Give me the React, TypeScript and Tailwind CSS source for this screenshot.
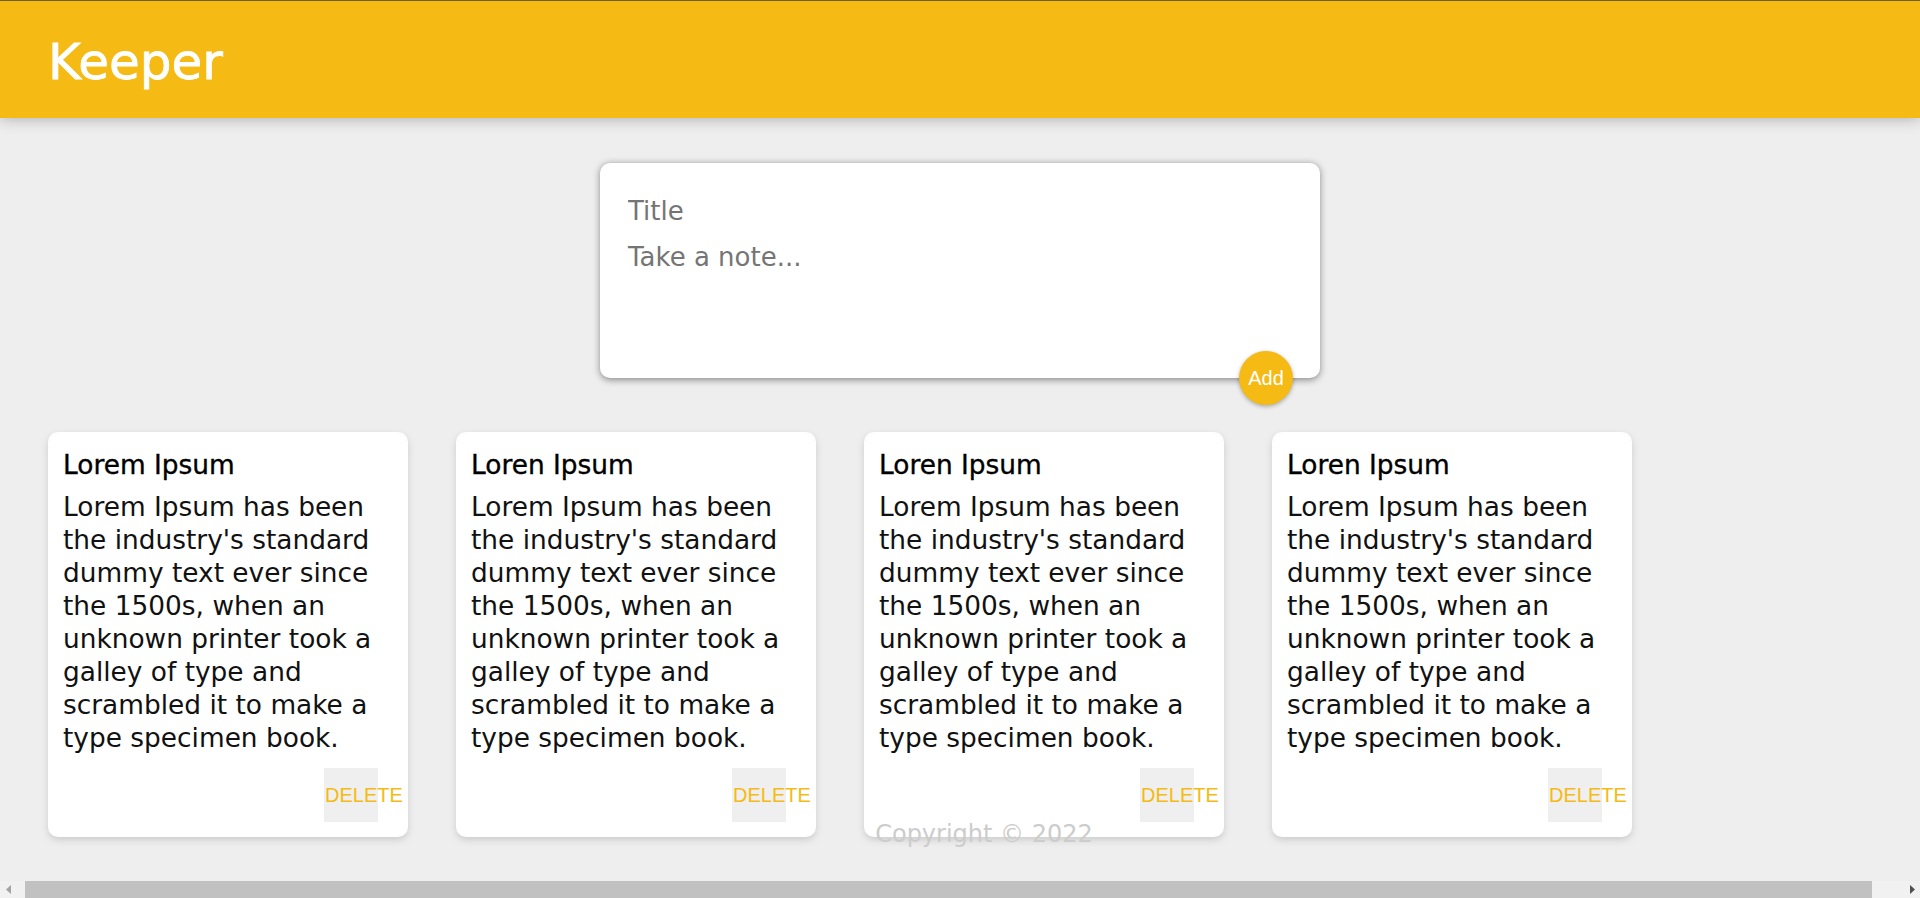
import { useState } from "react";

type Note = { title: string; content: string };

const body =
  "Lorem Ipsum has been the industry's standard dummy text ever since the 1500s, when an unknown printer took a galley of type and scrambled it to make a type specimen book.";

const initialNotes: Note[] = [
  { title: "Lorem Ipsum", content: body },
  { title: "Loren Ipsum", content: body },
  { title: "Loren Ipsum", content: body },
  { title: "Loren Ipsum", content: body },
];

function Header() {
  return (
    <header className="border-t border-[#6e601f] bg-[#f5ba13] h-[118px] px-[48px] pt-[4px] flex items-center shadow-[0_0_15px_0_rgba(0,0,0,0.3)] relative z-10">
      <h1 className="text-white text-[50px] leading-none font-['DejaVu_Sans',sans-serif] font-normal [-webkit-text-stroke:0.8px_white]">
        Keeper
      </h1>
    </header>
  );
}

function CreateArea({ onAdd }: { onAdd: (n: Note) => void }) {
  const [note, setNote] = useState<Note>({ title: "", content: "" });

  return (
    <form
      className="relative w-[720px] mx-auto mt-[45px] mb-[30px] bg-white p-[22px] rounded-[10px] shadow-[0_1.5px_7.5px_rgb(138,137,137)]"
      onSubmit={(e) => {
        e.preventDefault();
        onAdd(note);
        setNote({ title: "", content: "" });
      }}
    >
      <input
        value={note.title}
        onChange={(e) => setNote({ ...note, title: e.target.value })}
        placeholder="Title"
        className="block w-full h-[50px] px-[6px] pt-[2px] border-none outline-none text-[26px] placeholder:text-[#757575]"
      />
      <textarea
        value={note.content}
        onChange={(e) => setNote({ ...note, content: e.target.value })}
        placeholder="Take a note..."
        rows={3}
        className="block w-full h-[121px] p-[6px] border-none outline-none resize-none text-[26px] leading-[32px] placeholder:text-[#757575]"
      />
      <button
        type="submit"
        className="absolute right-[27px] bottom-[-27px] w-[54px] h-[54px] rounded-full bg-[#f5ba13] text-white text-[20px] font-['Liberation_Sans',Arial,sans-serif] shadow-[0_1.5px_4.5px_rgba(0,0,0,0.3)] flex items-center justify-center"
      >
        Add
      </button>
    </form>
  );
}

function NoteCard({ note, onDelete }: { note: Note; onDelete: () => void }) {
  return (
    <div className="w-[360px] m-[24px] px-[15px] pt-[17px] pb-[15px] bg-white rounded-[10px] shadow-[0_3px_7.5px_#ccc] flow-root">
      <h1 className="text-[26.4px] leading-[32px] mb-[9px] text-black [-webkit-text-stroke:0.35px_black]">
        {note.title}
      </h1>
      <p className="text-[26.4px] leading-[33px] mb-[14px] text-[#111] whitespace-pre-wrap break-words">
        {note.content}
      </p>
      <button
        onClick={onDelete}
        className="float-right mr-[15px] w-[54px] h-[54px] bg-[#efefef] text-[#f5ba13] text-[20px] font-['Liberation_Sans',Arial,sans-serif] whitespace-nowrap flex items-center justify-start pl-px overflow-visible"
      >
        DELETE
      </button>
    </div>
  );
}

function ScrollBar() {
  return (
    <div className="h-[17px] w-full bg-[#f1f1f1] flex items-stretch">
      <div className="w-[17px] flex items-center justify-center">
        <svg width="8" height="9" viewBox="0 0 8 9">
          <polygon points="6,0 6,9 1,4.5" fill="#a3a3a3" />
        </svg>
      </div>
      <div className="flex-1 flex items-stretch pl-[8px] pr-[31px]">
        <div className="flex-1 bg-[#c1c1c1]" />
      </div>
      <div className="w-[17px] flex items-center justify-center">
        <svg width="8" height="9" viewBox="0 0 8 9">
          <polygon points="2,0 2,9 7,4.5" fill="#505050" />
        </svg>
      </div>
    </div>
  );
}

export default function App() {
  const [notes, setNotes] = useState<Note[]>(initialNotes);

  return (
    <div className="h-[898px] w-[1920px] overflow-hidden flex flex-col bg-[#eeeeee] font-['DejaVu_Sans',sans-serif]">
      <div className="relative h-[881px] px-[24px] overflow-hidden">
        <div className="-mx-[24px]">
          <Header />
        </div>
        <CreateArea onAdd={(n) => setNotes([...notes, n])} />
        <div className="flex flex-wrap -mx-[24px] px-[24px]">
          {notes.map((n, i) => (
            <NoteCard key={i} note={n} onDelete={() => setNotes(notes.filter((_, j) => j !== i))} />
          ))}
        </div>
        <footer className="absolute bottom-0 left-[24px] w-[1920px] h-[65px] text-center">
          <p className="text-[#ccc] text-[24px]">Copyright © 2022</p>
        </footer>
      </div>
      <ScrollBar />
    </div>
  );
}
